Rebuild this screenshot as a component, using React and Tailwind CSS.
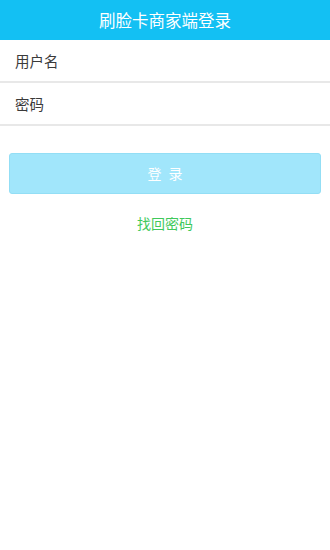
import React from "react";

const font = { fontFamily: '"Noto Sans CJK SC", "Noto Sans", sans-serif' };

export default function App() {
  return (
    <div className="w-[330px] h-[550px] bg-white flex flex-col" style={font}>
      <header className="h-[40px] shrink-0 bg-[#13c0f3] flex items-center justify-center">
        <h1 className="text-[16.5px] text-white leading-none">刷脸卡商家端登录</h1>
      </header>
      <div className="h-[43px] shrink-0 flex items-center px-[15px] border-b-2 border-[#e8e8e8]">
        <span className="text-[14.5px] text-[#3a3a3a]">用户名</span>
      </div>
      <div className="h-[43px] shrink-0 flex items-center px-[15px] border-b-2 border-[#e8e8e8]">
        <span className="text-[14.5px] text-[#3a3a3a]">密码</span>
      </div>
      <div className="px-[9px] pt-[27px]">
        <button className="w-full h-[41px] bg-[#a1e6fb] border border-[#93def5] rounded-[3px] text-white text-[14px] tracking-[7px] pl-[7px]">
          登录
        </button>
      </div>
      <div className="mt-[19px] text-center text-[14px] text-[#3fc95b]">找回密码</div>
    </div>
  );
}
